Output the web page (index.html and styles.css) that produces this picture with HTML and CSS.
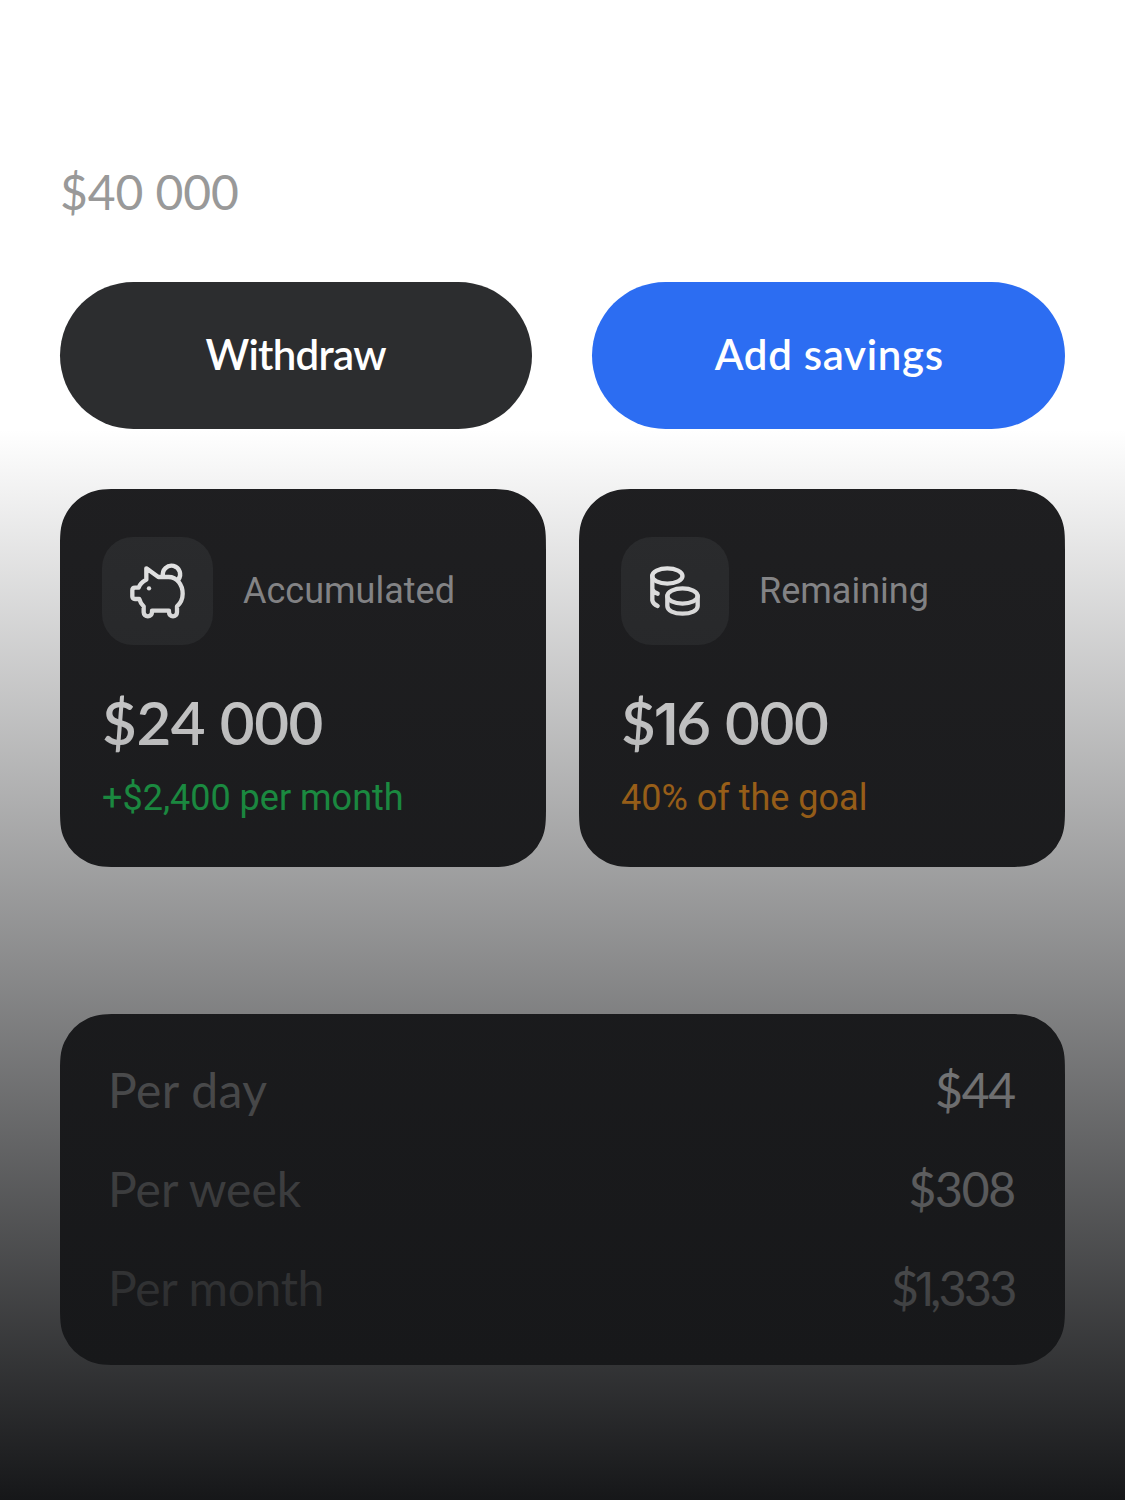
FILE: index.html
```
<!DOCTYPE html>
<html lang="en">
<head>
<meta charset="utf-8">
<title>Savings goal</title>
<link rel="stylesheet" href="styles.css">
</head>
<body>
<main class="screen">
  <p class="goal">$40 000</p>
  <div class="actions">
    <button class="btn btn-dark">Withdraw</button>
    <button class="btn btn-blue">Add savings</button>
  </div>
  <section class="stats">
    <article class="card stat">
      <div class="stat-head">
        <span class="tile tile-wide">
          <svg class="icon" viewBox="36 36 333 324" aria-hidden="true">
            <path d="M169 130L205 156H236C260 156 278 178 278 206C278 222 272 234 261 244V262A12 12 0 0 1 237 262V257H186V262A12.500 12 0 0 1 161 262V244C154 238 150 230 148 222H135Q127 222 127 214V196Q127 188 135 188H146C149 178 158 170 169 164Z"/>
            <path d="M219 153A26 26 0 1 1 265 164"/>
            <circle class="eye" cx="177" cy="190" r="6.500"/>
          </svg>
        </span>
        <span class="label">Accumulated</span>
      </div>
      <p class="value">$24 000</p>
      <p class="note green">+$2,400 per month</p>
    </article>
    <article class="card stat">
      <div class="stat-head">
        <span class="tile">
          <svg class="icon" viewBox="33 36 324 324" aria-hidden="true">
            <ellipse cx="172" cy="153" rx="45.500" ry="23"/>
            <path d="M127 153V226Q129 237 143 243M127 192Q129 202 143 206"/>
            <ellipse cx="217.500" cy="213" rx="45.500" ry="23"/>
            <path d="M172 213V243C172 257 192 266 217.500 266S263 257 263 243V213"/>
          </svg>
        </span>
        <span class="label">Remaining</span>
      </div>
      <p class="value">$<span class="one">1</span>6 000</p>
      <p class="note orange">40% of the goal</p>
    </article>
  </section>
  <section class="card rates">
    <div class="rate"><span class="day">Per day</span><span class="sum">$44</span></div>
    <div class="rate"><span>Per week</span><span class="sum">$308</span></div>
    <div class="rate"><span class="month">Per month</span><span class="sum sum-tight">$<span class="one">1</span>,333</span></div>
  </section>
</main>
</body>
</html>
```
FILE: styles.css
```
* { box-sizing: border-box; }
body { margin: 0; background: #fff; }
p { margin: 0; white-space: nowrap; }

.screen {
  position: relative;
  width: 1125px;
  height: 1500px;
  padding: 162px 60px 0;
  overflow: hidden;
  font-family: Lato, "Liberation Sans", sans-serif;
  color: #fff;
}

/* fade to dark over the lower part of the screen */
.screen::after {
  content: "";
  position: absolute;
  inset: 429px 0 0;
  background: linear-gradient(rgba(22, 23, 25, 0), #161719);
  pointer-events: none;
}

.goal { font-size: 48px; line-height: 60px; letter-spacing: -.1px; color: #999; }

.actions { display: flex; gap: 60px; margin-top: 60px; }
.btn {
  flex: 1;
  height: 147px;
  padding: 0 0 4px;
  border: 0;
  border-radius: 74px;
  color: #fff;
  font: 600 42px Lato, "Liberation Sans", sans-serif;
}
.btn-dark { background: #2c2d2f; letter-spacing: -.7px; }
.btn-blue { padding-left: 2px; background: #2c6df2; letter-spacing: .7px; }

.card { background: #1f1f21; }

.stats { display: flex; gap: 33px; margin-top: 60px; }
.stat {
  width: 486px;
  height: 378px;
  padding: 48px 42px 0;
  clip-path: path("M0 62C0 46 0 37.300 4.500 27.700A48 48 0 0 1 27.700 4.500C37.300 0 46 0 62 0H424C440 0 448.700 0 458.300 4.500A48 48 0 0 1 481.500 27.700C486 37.300 486 46 486 62V316C486 332 486 340.700 481.500 350.300A48 48 0 0 1 458.300 373.500C448.700 378 440 378 424 378H62C46 378 37.300 378 27.700 373.500A48 48 0 0 1 4.500 350.300C0 340.700 0 332 0 316Z");
}
.stat-head { display: flex; align-items: center; gap: 30px; }
.tile { width: 108px; height: 108px; border-radius: 31px; background: #2c2d2f; }
.tile-wide { width: 111px; }
.icon {
  display: block;
  width: 100%;
  height: 100%;
  fill: none;
  stroke: #fff;
  stroke-width: 13;
  stroke-linecap: round;
  stroke-linejoin: round;
}
.eye { fill: #fff; stroke: none; }
.label, .note { font: 36px/42px Roboto, "Liberation Sans", sans-serif; }
.label { color: #969698; }
.value {
  margin-top: 41px;
  font-weight: 600;
  font-size: 60px;
  line-height: 72px;
  letter-spacing: -.4px;
}
.note { margin-top: 19px; }
.green { color: #1dc454; }
.orange { color: #d98218; }
.one { margin: 0 -.03em; font-family: Inter, sans-serif; font-size: .97em; line-height: 0; }

.rates {
  height: 351px;
  margin-top: 147px;
  padding: 26px 50px 0 48px;
  clip-path: path("M0 62C0 46 0 37.300 4.500 27.700A48 48 0 0 1 27.700 4.500C37.300 0 46 0 62 0H943C959 0 967.700 0 977.300 4.500A48 48 0 0 1 1000.500 27.700C1005 37.300 1005 46 1005 62V289C1005 305 1005 313.700 1000.500 323.300A48 48 0 0 1 977.300 346.500C967.700 351 959 351 943 351H62C46 351 37.300 351 27.700 346.500A48 48 0 0 1 4.500 323.300C0 313.700 0 305 0 289Z");
}
.rate {
  display: flex;
  justify-content: space-between;
  font-size: 48px;
  line-height: 99px;
  color: #999;
}
.day { letter-spacing: .4px; }
.month { letter-spacing: -.3px; }
.sum { color: #fff; letter-spacing: -1.2px; }
.sum-tight { letter-spacing: -2.400px; }
```
